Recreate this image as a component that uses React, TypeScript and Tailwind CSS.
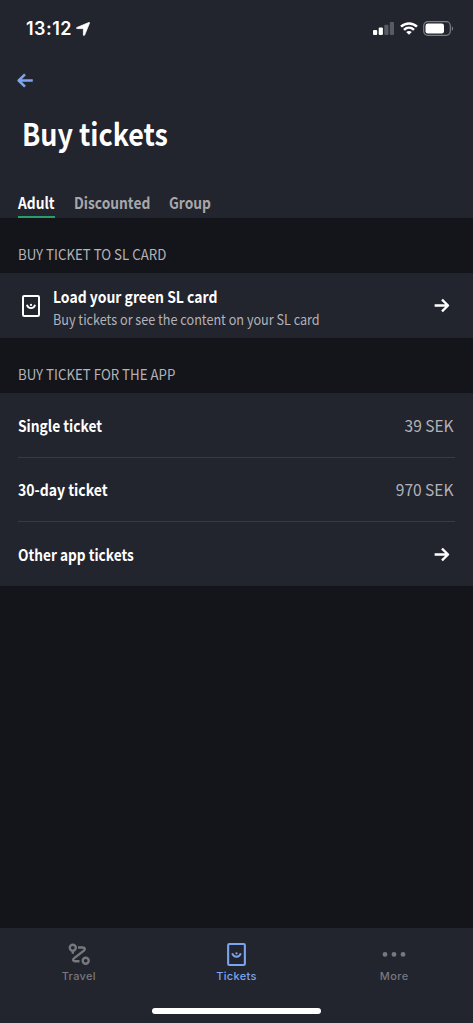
import type { ReactNode } from "react";

function Arrow({ className }: { className: string }) {
  return (
    <svg viewBox="0 0 18 16" className={className} fill="none" stroke="currentColor" strokeWidth="2.7">
      <path d="M.7 8H16M9 1.5L15.8 8L9 14.5" strokeLinejoin="round" />
    </svg>
  );
}

function TicketIcon({ className }: { className: string }) {
  return (
    <svg viewBox="0 0 18 22" className={className} fill="none" stroke="currentColor" strokeWidth="2">
      <rect x="1" y="1" width="16" height="20" rx="1.2" />
      <path d="M4.9 9.8C6 14.2 12 14.2 13.1 9.8" strokeWidth="1.8" />
      <circle cx="9" cy="9.9" r="1.1" fill="currentColor" stroke="none" />
    </svg>
  );
}

function StatusBar() {
  return (
    <div className="flex h-[57px] items-center pl-[26px] pr-[19px] text-white">
      <span className="w-[46px] font-['Inter',sans-serif] text-[18px] font-semibold leading-none tracking-[0.45px]">13:12</span>
      <svg viewBox="0 0 14 14" className="ml-[4px] h-[14px] w-[14px]" fill="currentColor" stroke="currentColor" strokeWidth=".8">
        <path d="M12.9.5C13.4.3 13.7.6 13.5 1.1L8.6 13.1C8.3 13.8 7.4 13.6 7.4 12.9V7.1L6.9 6.6H1.1C.4 6.6.2 5.8.9 5.5Z" />
      </svg>
      <div className="ml-auto flex items-center">
        <svg viewBox="0 0 21 13" className="h-[13px] w-[21px]" fill="currentColor">
          <rect y="8" width="4.2" height="5" rx="1" />
          <rect x="5.7" y="5.5" width="4.2" height="7.5" rx="1" />
          <rect x="11.3" y="2.7" width="4.2" height="10.3" rx="1" opacity=".25" />
          <rect x="16.8" width="4.2" height="13" rx="1" opacity=".25" />
        </svg>
        <svg viewBox="0 0 18 13" className="ml-[6px] h-[13px] w-[18px]" fill="none" stroke="currentColor" strokeWidth="2.5">
          <path d="M1 4.7C5.6.3 12.4.3 17 4.7M4 7.8C6.9 5 11.1 5 14 7.8" />
          <path d="M6.2 10C7.8 8.5 10.2 8.5 11.8 10L9 12.8Z" fill="currentColor" stroke="none" />
        </svg>
        <svg viewBox="0 0 31 15" className="ml-[5px] h-[15px] w-[31px]" fill="none">
          <rect x=".7" y=".7" width="26.6" height="13.6" rx="4" stroke="#7d7e84" strokeWidth="1.2" />
          <rect x="2.5" y="2.5" width="18.5" height="10" rx="2.3" fill="white" />
          <path d="M28.8 5.2V9.8C30.6 9 30.6 6 28.8 5.2Z" fill="#7d7e84" />
        </svg>
      </div>
    </div>
  );
}

function SectionTitle({ children }: { children: ReactNode }) {
  return (
    <h2 className="flex h-[55px] items-center pl-[18px] pt-[18px] text-[14.5px] font-normal leading-none text-[#b3b3b8]">
      <span className="origin-left scale-x-[0.915]">{children}</span>
    </h2>
  );
}

export default function App() {
  return (
    <main className="flex h-[1023px] w-[473px] flex-col overflow-hidden bg-[#14151a] font-['Noto_Sans_CJK_SC',sans-serif]">
      <header className="h-[218px] bg-[#22242e]">
        <StatusBar />
        <button aria-label="Back" className="ml-[16px] mt-[16px] block text-[#7ba5ee]">
          <Arrow className="h-[15px] w-[18px] rotate-180" />
        </button>
        <h1 className="ml-[22px] mt-[25px] h-[40px] origin-left scale-x-[0.868] whitespace-nowrap text-[31px] font-bold leading-[40px] text-white">Buy tickets</h1>
        <nav className="ml-[18px] mt-[38px] flex h-[27px] gap-[19px] whitespace-nowrap text-[16px] font-bold leading-[22px] text-[#a7a7ac]">
          <div className="h-[27px] w-[37px] border-b-2 border-[#2c9d69] text-white">
            <span className="inline-block origin-left scale-x-[0.86]">Adult</span>
          </div>
          <div className="w-[76px]">
            <span className="inline-block origin-left scale-x-[0.86]">Discounted</span>
          </div>
          <div className="w-[42px]">
            <span className="inline-block origin-left scale-x-[0.86]">Group</span>
          </div>
        </nav>
      </header>

      <SectionTitle>BUY TICKET TO SL CARD</SectionTitle>
      <section className="flex h-[65px] items-center bg-[#22242e] pl-[22px] pr-[23px] text-white">
        <TicketIcon className="h-[22px] w-[18px]" />
        <div className="ml-[13px] flex flex-col items-start whitespace-nowrap pt-[5px]">
          <span className="origin-left scale-x-[0.872] text-[16px] font-bold leading-[22px]">Load your green SL card</span>
          <span className="origin-left scale-x-[0.902] text-[14px] leading-[24px] text-[#b3b3b8]">Buy tickets or see the content on your SL card</span>
        </div>
        <Arrow className="ml-auto h-[15px] w-[16px]" />
      </section>

      <SectionTitle>BUY TICKET FOR THE APP</SectionTitle>
      <section className="h-[193px] bg-[#22242e] px-[18px] text-[16px] font-bold text-white">
        <div className="flex h-[65px] items-center justify-between border-b border-[#393a45]">
          <span className="origin-left scale-x-[0.86]">Single ticket</span>
          <span className="origin-right -translate-x-px scale-x-[0.97] font-normal text-[#b3b3b8]">39 SEK</span>
        </div>
        <div className="flex h-[64px] items-center justify-between border-b border-[#393a45] pb-[2px]">
          <span className="origin-left scale-x-[0.875]">30-day ticket</span>
          <span className="origin-right -translate-x-px scale-x-[0.97] font-normal text-[#b3b3b8]">970 SEK</span>
        </div>
        <div className="flex h-[64px] items-center justify-between pr-[5px]">
          <span className="origin-left scale-x-[0.853]">Other app tickets</span>
          <Arrow className="h-[15px] w-[16px]" />
        </div>
      </section>

      <footer className="mt-auto flex h-[95px] flex-col bg-[#22242e]">
        <nav className="grid h-[80px] grid-cols-3 font-['Inter',sans-serif] text-[11px] font-medium leading-none tracking-[0.35px] text-[#77787d]">
          <div className="flex flex-col items-center pt-[15px]">
            <svg viewBox="0 0 22 22" className="h-[22px] w-[22px]" fill="none" stroke="currentColor" strokeWidth="2.4">
              <circle cx="4.8" cy="4.8" r="3" />
              <path d="M4.8 8V10.8M10 4.5H14.8C17 4.5 17.4 6.2 15.9 7.7L6.2 15.1C4.5 16.5 4.9 18.2 6.6 18.2H11.5" />
              <circle cx="17.7" cy="17.7" r="3" />
            </svg>
            <span className="mt-[6px]">Travel</span>
          </div>
          <div className="flex flex-col items-center pt-[15px] text-[#7ba5ee]">
            <TicketIcon className="h-[23px] w-[19px]" />
            <span className="mt-[5px]">Tickets</span>
          </div>
          <div className="flex flex-col items-center pt-[15px]">
            <svg viewBox="0 0 24 23" className="h-[23px] w-[24px]" fill="currentColor">
              <circle cx="3" cy="11.4" r="2.4" />
              <circle cx="12" cy="11.4" r="2.4" />
              <circle cx="21" cy="11.4" r="2.4" />
            </svg>
            <span className="mt-[5px]">More</span>
          </div>
        </nav>
        <div className="mx-auto h-[6px] w-[169px] rounded-full bg-white" />
      </footer>
    </main>
  );
}
